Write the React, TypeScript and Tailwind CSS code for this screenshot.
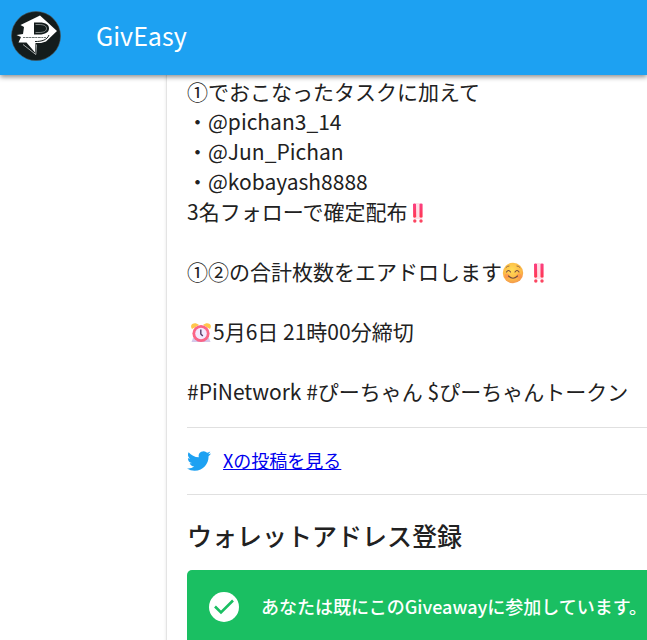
import React from "react";

const Logo = () => (
  <svg viewBox="0 0 50 50" className="h-[50px] w-[50px]" aria-hidden="true">
    <circle cx="25" cy="25" r="24.5" fill="#141c1c" stroke="#4b5557" strokeWidth="0.6" />
    <path
      d="M29 4.500 9.500 14l3.500 2-1 7-6.500 1 4.500 2-2.500 5.500h8l8.500 10 .500-9.500h5.500l5-1.500 11-10.500z"
      fill="#fff"
    />
    <path
      d="M23 11.500h5.500c6.500 0 9.500 2.500 9.500 6s-3.500 6-10 6h-5z"
      fill="#141c1c"
    />
    <path d="M24.500 13.500h3.500c5 0 7.500 1.500 7.500 4s-2.500 4-7.500 4h-3.500" fill="none" stroke="#aab0b0" strokeWidth="0.7" />
    <path d="M24 30.500c7 0 12-1.500 14-6.500" fill="none" stroke="#141c1c" strokeWidth="1" />
    <path d="M12 33.500l12.800 10 .700-10" fill="none" stroke="#c8cccc" strokeWidth="0.8" />
    <path d="M12 26.500h23" stroke="#6b7373" strokeWidth="1.2" strokeDasharray="2 .6 3 .5" />
  </svg>
);

const Exclaim = () => (
  <svg viewBox="0 0 26 24" className="inline h-6 w-[26px] align-[-5px]" role="img" aria-label="!!">
    <defs>
      <linearGradient id="red" x1="0" y1="0" x2="0" y2="1">
        <stop stopColor="#fb3f83" />
        <stop offset="1" stopColor="#ff3850" />
      </linearGradient>
    </defs>
    <rect x="6" y="2" width="10" height="16" rx="2" fill="#ffdfe6" />
    <path d="M6 3q1.500-1 3 0l.2 13q-1.700 1.500-3 0zM12.500 3q1.500-1 3 0v13q-1.500 1.500-3 0z" fill="url(#red)" />
    <circle cx="7.800" cy="20" r="1.700" fill="#fb4662" />
    <circle cx="14" cy="20" r="1.700" fill="#fb4662" />
  </svg>
);

const Smile = () => (
  <svg viewBox="3 0 26 24" className="inline h-6 w-[26px] align-[-5px]" role="img" aria-label="smile">
    <defs>
      <radialGradient id="face" cx=".45" cy=".35" r=".65">
        <stop stopColor="#ffdc58" />
        <stop offset=".7" stopColor="#fdb945" />
        <stop offset="1" stopColor="#f39a4d" />
      </radialGradient>
    </defs>
    <circle cx="14" cy="12" r="10.200" fill="url(#face)" />
    <circle cx="8" cy="15" r="2.500" fill="#ff8052" opacity=".5" />
    <circle cx="20" cy="15" r="2.500" fill="#ff8052" opacity=".5" />
    <g fill="none" stroke="#754a42" strokeWidth="1.100" strokeLinecap="round">
      <path d="M7.500 11q2-3 4 0M16 11q2-3 4 0M9.500 15q4.500 4.500 9 0" />
      <path d="M7 6.500q1-1.500 3-1.500M18 5q2 0 3 1.500" strokeWidth=".7" />
    </g>
  </svg>
);

const Clock = () => (
  <svg viewBox="0 0 26 24" className="inline h-6 w-[26px] align-[-5px]" role="img" aria-label="alarm">
    <path d="M6 17h16l1.500 4h-19z" fill="#d5c8ea" />
    <path d="M5 8C2 4 7 0 12 4zM23 8c3-4-2-8-7-4z" fill="#ffc64b" />
    <circle cx="14" cy="12.500" r="8.600" fill="#fa6487" />
    <circle cx="14" cy="12.500" r="5.800" fill="#f3e9ff" />
    <path d="M13.800 8.500v4.500l2 2" fill="none" stroke="#563a68" strokeWidth="1.400" />
  </svg>
);

const Bird = () => (
  <svg viewBox="0 0 24 24" className="h-6 w-6" fill="#1da1f2" aria-hidden="true">
    <path d="M23.953 4.570a10 10 0 01-2.825.775 4.958 4.958 0 002.163-2.723c-.951.555-2.005.959-3.127 1.184a4.920 4.920 0 00-8.384 4.482C7.690 8.095 4.067 6.130 1.640 3.162a4.822 4.822 0 00-.666 2.475c0 1.710.870 3.213 2.188 4.096a4.904 4.904 0 01-2.228-.616v.060a4.923 4.923 0 003.946 4.827 4.996 4.996 0 01-2.212.085 4.936 4.936 0 004.604 3.417 9.867 9.867 0 01-6.102 2.105c-.390 0-.779-.023-1.170-.067a13.995 13.995 0 007.557 2.209c9.053 0 13.998-7.496 13.998-13.985 0-.210 0-.420-.015-.630A9.935 9.935 0 0024 4.590z" />
  </svg>
);

const App = () => {
  return (
    <div className="flex min-h-screen flex-col overflow-hidden bg-white font-['Noto_Sans_CJK_JP',sans-serif] text-[#212121]">
      <header className="z-10 flex h-[75px] items-center gap-[35px] bg-[#1da1f2] px-[11px] pb-1 shadow-[0_2px_5px_rgba(0,0,0,0.45)]">
        <Logo />
        <span className="text-[25px] text-white">GivEasy</span>
      </header>
      <main className="ml-[166px] grow border-l border-[#e4e4e4] pl-5 shadow-[0_0_3px_rgba(0,0,0,0.1)]">
        <div className="pt-px pb-[21px] text-[21px] leading-[30px] whitespace-nowrap">
          <p>①でおこなったタスクに加えて</p>
          <p>・@pichan3_14</p>
          <p>・@Jun_Pichan</p>
          <p>・@kobayash8888</p>
          <p>
            3名フォローで確定配布
            <Exclaim />
          </p>
          <br />
          <p>
            ①②の合計枚数をエアドロします
            <Smile />
            <Exclaim />
          </p>
          <br />
          <p>
            <Clock />
            5月6日 21時00分締切
          </p>
          <br />
          <p>#PiNetwork #ぴーちゃん $ぴーちゃんトークン</p>
        </div>
        <div className="flex h-[68px] items-center gap-3 border-y border-[#e0e0e0]">
          <Bird />
          <a href="#post" className="pb-[2px] text-[18px] text-[#0000ee] underline">
            Xの投稿を見る
          </a>
        </div>
        <h2 className="pt-[22px] pb-[17px] text-[25px] leading-9 font-medium">ウォレットアドレス登録</h2>
        <div className="flex h-[73px] items-center gap-[22px] rounded-tl-[5px] bg-[#1abf62] pl-[22px] font-medium whitespace-nowrap text-white">
          <svg viewBox="0 0 30 30" className="h-[30px] w-[30px] shrink-0" aria-hidden="true">
            <circle cx="15" cy="15" r="15" fill="#fff" />
            <path d="M6 14.500l6 6L24 8.500" fill="none" stroke="#1abf62" strokeWidth="2.600" />
          </svg>
          <p className="text-[18px]">あなたは既にこのGiveawayに参加しています。</p>
        </div>
      </main>
    </div>
  );
};

export default App;
